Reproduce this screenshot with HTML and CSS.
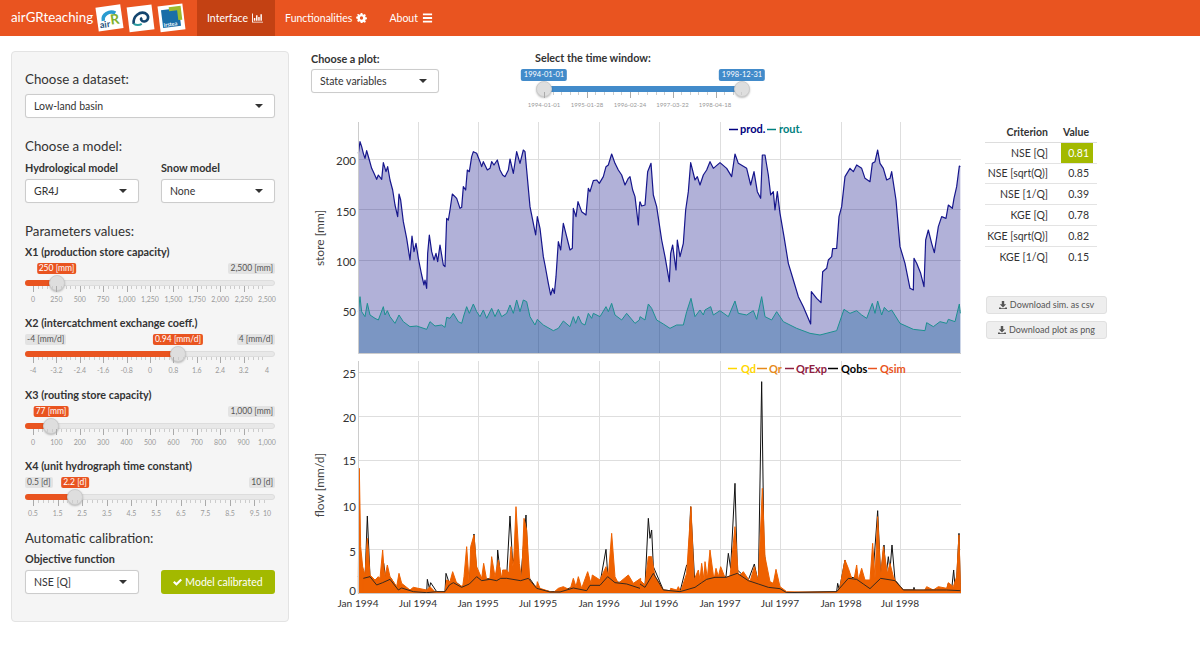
FILE: index.html
```html
<!DOCTYPE html>
<html lang="en">
<head>
<meta charset="utf-8">
<title>airGRteaching</title>
<link rel="stylesheet" href="styles.css">
</head>
<body>
<nav class="navbar">
  <span class="brand">airGRteaching</span>
  <svg class="logos" width="94" height="32" viewBox="0 0 94 32">
    <g transform="rotate(-8 14 16)">
      <rect x="2" y="4" width="25" height="24" fill="#fff"/>
      <path d="M8 18a8 7 0 0 1 13-6" fill="none" stroke="#2a9bd0" stroke-width="3.5"/>
      <text x="15" y="23" class="logo-r">R</text>
      <text x="4" y="25" class="logo-air">air</text>
    </g>
    <g transform="rotate(-7 45 16)">
      <rect x="33" y="4" width="25" height="25" fill="#fff"/>
      <path d="M38 21c0-8 8-12 13-9 4 3 2 8-2 8-3 0-4-3-2-4" fill="none" stroke="#14456f" stroke-width="2.6"/>
      <path d="M38 21q4 3 8 1" fill="none" stroke="#2a9ba0" stroke-width="2"/>
    </g>
    <g transform="rotate(-7 76 16)">
      <rect x="64" y="3" width="25" height="26" fill="#fff"/>
      <rect x="67" y="7" width="18" height="18" fill="#1a6ea8"/>
      <path d="M75 5h12v14h-4V9h-8z" fill="#9cbb2e"/>
      <text x="68" y="24" class="logo-irstea">irstea</text>
    </g>
  </svg>
  <ul class="nav-list">
    <li class="nav-item active">Interface
      <svg class="nav-icon" viewBox="0 0 12 10"><path d="M0 0h1v9h11v1H0z M2 5h1.6v3H2z M4.4 2h1.6v6H4.4z M6.8 4h1.6v4H6.8z M9.2 1h1.6v7H9.2z" fill="#fff"/></svg>
    </li>
    <li class="nav-item">Functionalities
      <svg class="nav-icon" viewBox="0 0 12 12"><path d="M5 0h2l.3 1.6 1.2.5L9.9 1.2l1.4 1.4-.9 1.4.5 1.2 1.6.3v2l-1.6.3-.5 1.2.9 1.4-1.4 1.4-1.4-.9-1.2.5L7 12H5l-.3-1.6-1.2-.5-1.4.9L.7 9.4l.9-1.4-.5-1.2L-.4 6.5v-2l1.5-.3.5-1.2-.9-1.4L2.1 1.2l1.4.9 1.2-.5zM6 4a2 2 0 1 0 0 4 2 2 0 0 0 0-4z" fill="#fff" fill-rule="evenodd"/></svg>
    </li>
    <li class="nav-item">About
      <svg class="nav-icon" viewBox="0 0 12 10"><path d="M1 0h10v2H1zM1 4h10v2H1zM1 8h10v2H1z" fill="#fff"/></svg>
    </li>
  </ul>
</nav>

<div class="layout">
  <aside class="panel">
    <h4 class="heading first">Choose a dataset:</h4>
    <div class="select">Low-land basin</div>

    <h4 class="heading">Choose a model:</h4>
    <div class="field-row">
      <div class="field"><label class="label">Hydrological model</label><div class="select">GR4J</div></div>
      <div class="field"><label class="label">Snow model</label><div class="select">None</div></div>
    </div>

    <h4 class="heading">Parameters values:</h4>

    <label class="label param first-param">X1 (production store capacity)</label>
    <div class="slider">
      <div class="track"></div>
      <div class="fill" style="width:32px"></div>
      <span class="badge end">2,500 [mm]</span>
      <span class="badge value" style="left:31.5px">250 [mm]</span>
      <div class="handle" style="left:32px"></div>
      <div class="grid">
        <span style="left:0%">0</span><span style="left:10%">250</span><span style="left:20%">500</span><span style="left:30%">750</span><span style="left:40%">1,000</span><span style="left:50%">1,250</span><span style="left:60%">1,500</span><span style="left:70%">1,750</span><span style="left:80%">2,000</span><span style="left:90%">2,250</span><span style="left:100%">2,500</span>
      </div>
    </div>

    <label class="label param">X2 (intercatchment exchange coeff.)</label>
    <div class="slider">
      <div class="track"></div>
      <div class="fill" style="width:153px"></div>
      <span class="badge start">-4 [mm/d]</span>
      <span class="badge end">4 [mm/d]</span>
      <span class="badge value" style="left:153px">0.94 [mm/d]</span>
      <div class="handle" style="left:153px"></div>
      <div class="grid">
        <span style="left:0%">-4</span><span style="left:10%">-3.2</span><span style="left:20%">-2.4</span><span style="left:30%">-1.6</span><span style="left:40%">-0.8</span><span style="left:50%">0</span><span style="left:60%">0.8</span><span style="left:70%">1.6</span><span style="left:80%">2.4</span><span style="left:90%">3.2</span><span style="left:100%">4</span>
      </div>
    </div>

    <label class="label param">X3 (routing store capacity)</label>
    <div class="slider">
      <div class="track"></div>
      <div class="fill" style="width:26px"></div>
      <span class="badge end">1,000 [mm]</span>
      <span class="badge value" style="left:26px">77 [mm]</span>
      <div class="handle" style="left:26px"></div>
      <div class="grid">
        <span style="left:0%">0</span><span style="left:10%">100</span><span style="left:20%">200</span><span style="left:30%">300</span><span style="left:40%">400</span><span style="left:50%">500</span><span style="left:60%">600</span><span style="left:70%">700</span><span style="left:80%">800</span><span style="left:90%">900</span><span style="left:100%">1,000</span>
      </div>
    </div>

    <label class="label param">X4 (unit hydrograph time constant)</label>
    <div class="slider short">
      <div class="track"></div>
      <div class="fill" style="width:50px"></div>
      <span class="badge start">0.5 [d]</span>
      <span class="badge end">10 [d]</span>
      <span class="badge value" style="left:50px">2.2 [d]</span>
      <div class="handle" style="left:50px"></div>
      <div class="grid wide-major">
        <span style="left:0%">0.5</span><span style="left:10.5%">1.5</span><span style="left:21%">2.5</span><span style="left:31.6%">3.5</span><span style="left:42.1%">4.5</span><span style="left:52.6%">5.5</span><span style="left:63.2%">6.5</span><span style="left:73.7%">7.5</span><span style="left:84.2%">8.5</span><span style="left:94.7%">9.5</span><span style="left:100%">10</span>
      </div>
    </div>

    <h4 class="heading tight">Automatic calibration:</h4>
    <label class="label obj">Objective function</label>
    <div class="field-row">
      <div class="select field">NSE [Q]</div>
      <button class="btn-success field">
        <svg class="btn-icon" viewBox="0 0 12 10"><path d="M0 5.5 2 3.5l2.6 2.6L10 0.6l2 2-7.4 7.4z" fill="#fff"/></svg>
        Model calibrated
      </button>
    </div>
  </aside>

  <main class="content">
    <div class="controls">
      <div class="plot-field">
        <label class="label">Choose a plot:</label>
        <div class="select">State variables</div>
      </div>
      <div class="time-field">
        <label class="label">Select the time window:</label>
        <div class="time-slider">
          <div class="time-track"></div>
          <span class="badge blue" style="left:9px">1994-01-01</span>
          <span class="badge blue" style="left:207px">1998-12-31</span>
          <div class="handle" style="left:9px"></div>
          <div class="handle" style="left:207px"></div>
          <div class="time-grid">
            <span style="left:0">1994-01-01</span><span style="left:43px">1995-01-28</span><span style="left:86px">1996-02-24</span><span style="left:128.5px">1997-03-22</span><span style="left:171px">1998-04-18</span>
          </div>
        </div>
      </div>
    </div>

    <div class="chart-row">
      <svg class="chart" width="660" height="495" viewBox="310 120 660 495">
        <!-- grid, top chart -->
        <path class="gridline" d="M418.5 122V353M478.5 122V353M538.5 122V353M599.5 122V353M659.5 122V353M720.5 122V353M780.5 122V353M841.5 122V353M900.5 122V353M358 159.5H961M358 209.5H961M358 260.5H961M358 310.5H961"/>
        <!-- areas, top chart -->
        <g opacity=".3" fill="#000080">
          <polygon transform="translate(310 120) scale(.33333)" points="145,700 145,100 150,65 155,80 160,100 165,115 170,92 178,120 185,145 192,160 200,178 205,165 215,178 220,128 228,155 233,140 240,180 248,210 255,255 263,290 267,222 272,240 280,305 290,355 300,420 306,348 312,395 318,370 325,415 335,465 342,495 345,480 350,505 353,400 358,345 365,395 372,420 378,400 383,425 390,375 400,435 405,440 410,295 415,300 420,270 427,222 440,235 450,265 455,262 460,200 467,210 472,150 478,155 485,110 490,95 500,100 510,125 515,140 520,125 532,150 540,145 545,125 552,135 562,120 570,150 578,165 585,170 595,150 600,117 610,160 620,95 630,130 640,90 645,95 650,150 660,260 670,310 677,345 682,290 690,325 700,410 705,435 715,490 722,525 728,505 733,520 738,470 745,365 752,390 760,310 770,350 780,390 787,385 790,265 798,290 804,245 815,275 828,285 835,205 840,215 850,182 860,180 868,190 880,170 888,140 895,135 905,102 915,130 925,150 935,165 945,195 955,175 960,170 968,210 975,230 985,315 988,260 992,245 992,700"/>
          <polygon transform="translate(640 120) scale(.33333)" points="0,700 0,245 5,258 15,255 23,155 33,130 40,225 50,260 65,360 75,410 88,485 92,400 98,375 108,450 112,360 120,410 130,370 137,270 145,215 152,128 165,180 172,170 180,195 190,165 200,150 210,125 220,145 240,128 260,145 275,170 285,102 295,130 320,145 332,195 342,155 352,215 362,235 367,105 375,105 385,165 392,225 400,215 405,270 412,215 420,280 432,350 445,430 460,480 475,530 490,560 512,612 514,515 530,535 543,548 548,455 560,445 565,420 575,410 578,386 590,385 597,290 605,260 615,170 630,145 640,155 650,135 665,145 675,175 690,185 697,130 705,125 713,90 720,130 730,145 740,180 750,175 755,155 768,240 780,380 795,430 810,505 820,510 822,415 830,430 842,460 852,500 857,360 865,330 875,370 883,398 895,320 905,290 918,295 925,255 937,265 942,235 950,200 958,138 961,140 961,700"/>
        </g>
        <g opacity=".3" fill="#005a96">
          <polygon transform="translate(310 120) scale(.33333)" points="145,700 145,575 150,530 155,575 165,590 172,550 180,585 195,595 205,600 220,560 225,585 232,572 240,590 255,610 267,585 280,605 300,620 320,618 350,628 360,605 375,618 395,615 405,622 410,592 420,595 430,580 445,605 455,610 462,585 470,560 478,580 490,552 500,575 510,590 520,570 530,595 545,565 555,590 565,568 575,590 590,580 600,555 610,580 620,540 630,575 640,540 650,545 660,590 675,615 682,598 700,615 730,632 745,625 760,603 780,620 790,590 797,610 805,588 815,610 825,615 835,580 845,595 850,580 870,590 888,560 895,575 905,550 915,585 935,600 950,580 975,610 988,600 992,590 992,700"/>
          <polygon transform="translate(640 120) scale(.33333)" points="0,700 0,590 15,600 25,552 35,565 50,600 70,612 90,625 110,615 130,615 140,575 153,535 165,590 180,570 190,585 195,570 212,560 220,585 240,572 265,590 285,543 295,580 320,585 340,572 350,598 365,530 375,590 395,600 410,575 430,605 470,625 510,640 540,645 590,632 612,568 630,580 650,572 665,585 680,595 697,550 705,580 713,543 725,585 733,562 745,575 755,570 780,610 820,628 855,632 860,608 880,620 900,605 920,610 925,598 945,605 958,552 961,580 961,700"/>
        </g>
        <!-- lines, top chart -->
        <polyline class="line prod" transform="translate(310 120) scale(.33333)" points="145,100 150,65 155,80 160,100 165,115 170,92 178,120 185,145 192,160 200,178 205,165 215,178 220,128 228,155 233,140 240,180 248,210 255,255 263,290 267,222 272,240 280,305 290,355 300,420 306,348 312,395 318,370 325,415 335,465 342,495 345,480 350,505 353,400 358,345 365,395 372,420 378,400 383,425 390,375 400,435 405,440 410,295 415,300 420,270 427,222 440,235 450,265 455,262 460,200 467,210 472,150 478,155 485,110 490,95 500,100 510,125 515,140 520,125 532,150 540,145 545,125 552,135 562,120 570,150 578,165 585,170 595,150 600,117 610,160 620,95 630,130 640,90 645,95 650,150 660,260 670,310 677,345 682,290 690,325 700,410 705,435 715,490 722,525 728,505 733,520 738,470 745,365 752,390 760,310 770,350 780,390 787,385 790,265 798,290 804,245 815,275 828,285 835,205 840,215 850,182 860,180 868,190 880,170 888,140 895,135 905,102 915,130 925,150 935,165 945,195 955,175 960,170 968,210 975,230 985,315 988,260 990,245"/>
        <polyline class="line prod" transform="translate(640 120) scale(.33333)" points="0,245 5,258 15,255 23,155 33,130 40,225 50,260 65,360 75,410 88,485 92,400 98,375 108,450 112,360 120,410 130,370 137,270 145,215 152,128 165,180 172,170 180,195 190,165 200,150 210,125 220,145 240,128 260,145 275,170 285,102 295,130 320,145 332,195 342,155 352,215 362,235 367,105 375,105 385,165 392,225 400,215 405,270 412,215 420,280 432,350 445,430 460,480 475,530 490,560 512,612 514,515 530,535 543,548 548,455 560,445 565,420 575,410 578,386 590,385 597,290 605,260 615,170 630,145 640,155 650,135 665,145 675,175 690,185 697,130 705,125 713,90 720,130 730,145 740,180 750,175 755,155 768,240 780,380 795,430 810,505 820,510 822,415 830,430 842,460 852,500 857,360 865,330 875,370 883,398 895,320 905,290 918,295 925,255 937,265 942,235 950,200 958,138 961,140"/>
        <polyline class="line rout" transform="translate(310 120) scale(.33333)" points="145,575 150,530 155,575 165,590 172,550 180,585 195,595 205,600 220,560 225,585 232,572 240,590 255,610 267,585 280,605 300,620 320,618 350,628 360,605 375,618 395,615 405,622 410,592 420,595 430,580 445,605 455,610 462,585 470,560 478,580 490,552 500,575 510,590 520,570 530,595 545,565 555,590 565,568 575,590 590,580 600,555 610,580 620,540 630,575 640,540 650,545 660,590 675,615 682,598 700,615 730,632 745,625 760,603 780,620 790,590 797,610 805,588 815,610 825,615 835,580 845,595 850,580 870,590 888,560 895,575 905,550 915,585 935,600 950,580 975,610 988,600 990,590"/>
        <polyline class="line rout" transform="translate(640 120) scale(.33333)" points="0,590 15,600 25,552 35,565 50,600 70,612 90,625 110,615 130,615 140,575 153,535 165,590 180,570 190,585 195,570 212,560 220,585 240,572 265,590 285,543 295,580 320,585 340,572 350,598 365,530 375,590 395,600 410,575 430,605 470,625 510,640 540,645 590,632 612,568 630,580 650,572 665,585 680,595 697,550 705,580 713,543 725,585 733,562 745,575 755,570 780,610 820,628 855,632 860,608 880,620 900,605 920,610 925,598 945,605 958,552 961,580"/>
        <path class="axis" d="M358.5 122V353.5H961"/>
        <text class="tick" x="356" y="165" text-anchor="end">200</text>
        <text class="tick" x="356" y="216" text-anchor="end">150</text>
        <text class="tick" x="356" y="266" text-anchor="end">100</text>
        <text class="tick" x="356" y="316" text-anchor="end">50</text>
        <text class="tick title" transform="translate(324 238) rotate(-90)" text-anchor="middle">store [mm]</text>
        <path class="key" stroke="#000080" d="M729 129.5H738"/><text class="legend" fill="#000080" x="740" y="133">prod.</text>
        <path class="key" stroke="#008080" d="M767 129.5H776"/><text class="legend" fill="#008080" x="779" y="133">rout.</text>

        <!-- grid, bottom chart -->
        <path class="gridline" d="M418.5 361V593M478.5 361V593M538.5 361V593M599.5 361V593M659.5 361V593M720.5 361V593M780.5 361V593M841.5 361V593M900.5 361V593M358 372.5H961M358 416.5H961M358 460.5H961M358 504.5H961M358 549.5H961"/>
        <polyline class="line obs" transform="translate(310 360) scale(.33333)" points="145,650 148,640 152,590 158,640 165,660 172,468 180,650 200,675 218,660 221,610 228,660 240,650 265,690 275,680 310,695 350,698 352,658 358,685 362,668 380,695 405,695 408,640 418,670 430,660 455,680 478,665 482,610 492,522 500,640 515,660 540,655 560,660 563,570 572,650 590,650 600,468 608,610 620,570 632,660 648,465 655,650 680,685 720,695 750,695 790,680 830,690 840,670 870,670 888,568 893,640 905,640 915,665 950,670 990,685"/>
        <polyline class="line obs" transform="translate(640 360) scale(.33333)" points="0,670 15,680 25,475 30,535 35,510 40,620 70,690 120,695 140,615 145,610 152,440 165,680 185,665 200,655 225,650 240,655 258,650 265,580 272,625 285,370 292,630 325,660 343,612 355,670 365,65 372,570 385,680 420,685 440,698 590,695 593,670 598,690 615,600 625,650 650,655 670,670 690,685 700,630 713,452 722,650 732,555 738,650 745,590 750,630 756,555 765,660 790,690 820,690 822,682 826,695 890,690 920,690 925,670 935,688 941,630 945,680 950,660 957,520 961,690"/>
        <polygon class="sim" transform="translate(310 360) scale(.33333)" points="145,700 145,640 148,325 152,560 158,620 165,645 172,535 180,645 195,660 205,650 210,655 218,570 224,655 232,615 240,650 260,680 267,640 275,670 300,690 310,682 350,690 360,680 375,695 405,695 410,660 420,665 428,635 440,670 458,680 462,650 470,560 478,675 482,560 492,525 500,620 515,655 521,610 530,660 540,655 545,590 555,650 565,600 575,655 578,630 590,630 597,640 603,560 610,630 618,440 628,610 635,660 642,475 650,510 660,670 680,680 682,665 690,685 730,698 745,685 760,680 780,690 790,655 798,680 805,650 815,685 833,635 843,670 847,645 870,660 888,620 895,650 905,520 915,650 925,670 955,645 970,670 992,655 992,700"/>
        <polygon class="sim" transform="translate(640 360) scale(.33333)" points="0,700 0,660 15,675 25,590 35,590 45,650 70,690 90,695 92,685 110,690 115,680 122,695 140,640 153,440 162,660 175,630 180,660 185,610 192,660 195,605 202,655 210,570 222,660 228,625 235,650 242,620 258,660 270,650 285,500 295,650 310,635 330,665 343,620 355,665 367,385 375,590 390,665 400,670 408,628 420,680 440,695 590,698 600,680 615,600 625,625 640,670 650,615 655,660 665,625 675,660 690,660 698,550 705,655 713,470 722,650 730,560 742,640 750,610 760,650 780,690 850,698 860,680 880,690 895,680 920,685 925,668 940,680 950,650 957,525 961,670 961,700"/>
        <polygon class="sim" transform="translate(310 360) scale(.33333)" points="160,700 160,655 180,650 200,675 218,668 240,658 265,690 275,684 310,695 350,698 380,695 405,695 418,675 430,668 455,682 478,672 500,650 515,662 540,658 560,662 572,655 590,655 632,662 655,655 680,685 720,696 750,696 790,684 830,692 840,676 870,676 893,650 915,668 950,672 990,685 990,700"/>
        <polygon class="sim" transform="translate(640 360) scale(.33333)" points="0,700 0,672 15,682 40,640 70,690 120,695 165,682 185,668 200,658 225,652 258,652 292,640 325,662 355,672 385,682 420,686 440,698 590,695 625,655 650,658 670,672 690,686 722,655 765,662 790,690 890,690 920,690 961,692 961,700"/>
        <polyline class="line obs-over" transform="translate(310 360) scale(.33333)" points="160,655 180,650 200,675 218,668 240,658 265,690 275,684 310,695 350,698 380,695 405,695 418,675 430,668 455,682 478,672 500,650 515,662 540,658 560,662 572,655 590,655 632,662 655,655 680,685 720,696 750,696 790,684 830,692 840,676 870,676 893,650 915,668 950,672 990,685"/>
        <polyline class="line obs-over" transform="translate(640 360) scale(.33333)" points="0,672 15,682 40,640 70,690 120,695 165,682 185,668 200,658 225,652 258,652 292,640 325,662 355,672 385,682 420,686 440,698 590,695 625,655 650,658 670,672 690,686 722,655 765,662 790,690 890,690 920,690 961,692"/>
        <path class="axis" d="M358.5 361V593.5H961"/>
        <text class="tick" x="356" y="378" text-anchor="end">25</text>
        <text class="tick" x="356" y="422" text-anchor="end">20</text>
        <text class="tick" x="356" y="465" text-anchor="end">15</text>
        <text class="tick" x="356" y="511" text-anchor="end">10</text>
        <text class="tick" x="356" y="556" text-anchor="end">5</text>
        <text class="tick" x="356" y="595" text-anchor="end">0</text>
        <text class="tick date" x="358" y="607" text-anchor="middle">Jan 1994</text>
        <text class="tick date" x="418" y="607" text-anchor="middle">Jul 1994</text>
        <text class="tick date" x="478" y="607" text-anchor="middle">Jan 1995</text>
        <text class="tick date" x="538" y="607" text-anchor="middle">Jul 1995</text>
        <text class="tick date" x="599" y="607" text-anchor="middle">Jan 1996</text>
        <text class="tick date" x="659" y="607" text-anchor="middle">Jul 1996</text>
        <text class="tick date" x="720" y="607" text-anchor="middle">Jan 1997</text>
        <text class="tick date" x="780" y="607" text-anchor="middle">Jul 1997</text>
        <text class="tick date" x="841" y="607" text-anchor="middle">Jan 1998</text>
        <text class="tick date" x="900" y="607" text-anchor="middle">Jul 1998</text>
        <text class="tick title" transform="translate(324 485) rotate(-90)" text-anchor="middle">flow [mm/d]</text>
        <path class="key" stroke="#ffd700" d="M728 368.5H737"/><text class="legend" fill="#ffd700" x="741" y="373">Qd</text>
        <path class="key" stroke="#e68a1a" d="M757 368.5H767"/><text class="legend" fill="#e68a1a" x="769" y="373">Qr</text>
        <path class="key" stroke="#8f2040" d="M785 368.5H794"/><text class="legend" fill="#8f2040" x="796" y="373">QrExp</text>
        <path class="key" stroke="#000" d="M828 368.5H838"/><text class="legend" fill="#000" x="841" y="373">Qobs</text>
        <path class="key" stroke="#e95420" d="M868 368.5H877"/><text class="legend" fill="#e95420" x="880" y="373">Qsim</text>
      </svg>

      <div class="side">
        <table class="scores">
          <thead><tr><th>Criterion</th><th class="val">Value</th></tr></thead>
          <tbody>
            <tr><td>NSE [Q]</td><td class="val"><span class="best">0.81</span></td></tr>
            <tr><td>NSE [sqrt(Q)]</td><td class="val">0.85</td></tr>
            <tr><td>NSE [1/Q]</td><td class="val">0.39</td></tr>
            <tr><td>KGE [Q]</td><td class="val">0.78</td></tr>
            <tr><td>KGE [sqrt(Q)]</td><td class="val">0.82</td></tr>
            <tr><td>KGE [1/Q]</td><td class="val">0.15</td></tr>
          </tbody>
        </table>
        <button class="btn-dl"><svg class="dl-icon" viewBox="0 0 10 10"><path d="M3.5 0h3v4H9L5 8 1 4h2.5zM0 8h2l1 1h4l1-1h2v2H0z" fill="#555"/></svg> Download sim. as csv</button>
        <button class="btn-dl"><svg class="dl-icon" viewBox="0 0 10 10"><path d="M3.5 0h3v4H9L5 8 1 4h2.5zM0 8h2l1 1h4l1-1h2v2H0z" fill="#555"/></svg> Download plot as png</button>
      </div>
    </div>
  </main>
</div>
</body>
</html>
```

FILE: styles.css
```css
* { box-sizing: border-box; }
html, body { margin: 0; padding: 0; }
body {
  background: #fff;
  color: #333;
  font-family: Lato, "Noto Sans", sans-serif;
  font-size: 11px;
  width: 1200px;
  height: 656px;
  overflow: hidden;
}

/* navbar */
.navbar {
  display: flex;
  align-items: center;
  height: 36px;
  background: #e95420;
  color: #fff;
}
.brand { margin-left: 11px; font-size: 13.3px; line-height: 36px; position: relative; top: -1px; width: 83px; white-space: nowrap; }
.logos { margin-left: 1px; flex: none; }
.logo-air { font: bold 9px Lato, sans-serif; fill: #1c4f7a; }
.logo-r { font: bold 14px Lato, sans-serif; fill: #7fb02c; }
.logo-irstea { font: bold 5.5px Lato, sans-serif; fill: #fff; }
.nav-list { display: flex; list-style: none; margin: 0 0 0 8px; padding: 0; height: 36px; }
.nav-item { display: flex; align-items: center; gap: 4px; padding: 0 12px 0 10px; font-size: 10.5px; white-space: nowrap; }
.nav-item.active { background: #c34113; }
.nav-icon { width: 11px; height: 10px; }

/* layout */
.layout { display: flex; gap: 21px; padding: 15px 0 0 11px; }
.panel {
  width: 278px;
  height: 571px;
  padding: 0 13px;
  flex: none;
  background: #f5f5f5;
  border: 1px solid #e3e3e3;
  border-radius: 4px;
}
.heading { margin: 18px 0 0; font-size: 13.3px; font-weight: 400; line-height: 20px; color: #333; white-space: nowrap; }
.heading.first { margin-top: 17px; margin-bottom: 5px; }
.heading.tight { margin-top: 0; }
.label { display: block; font-size: 10.8px; font-weight: 700; line-height: 12px; margin: 6px 0 5px; color: #333; white-space: nowrap; }
.label.param { margin: 0; }
.label.first-param { margin-top: 5px; }
.label.obj { margin: 5px 0 5px; }
.field-row { display: flex; gap: 22px; }
.field { flex: 0 0 114px; min-width: 0; }

.select {
  position: relative;
  height: 24px;
  padding-left: 8px;
  line-height: 22px;
  font-size: 10.5px;
  background: #fff;
  border: 1px solid #ccc;
  border-radius: 3px;
  box-shadow: 0 0 1px rgba(0,0,0,.1);
}
.select::after {
  content: "";
  position: absolute;
  right: 11px;
  top: 9px;
  border: 4px solid transparent;
  border-top-color: #333;
  border-bottom-width: 0;
}

/* sliders */
.slider { position: relative; height: 59.4px; }
.slider.short { height: 55.5px; }
.track {
  position: absolute; left: 0; right: 0; top: 22px; height: 6px;
  background: #e8e8e8; border: 1px solid #ddd; border-radius: 3px;
}
.fill { position: absolute; left: 0; top: 22px; height: 6px; background: #e95420; border-radius: 3px 0 0 3px; }
.handle {
  position: absolute; top: 17px; width: 16px; height: 16px; margin-left: -8px;
  border-radius: 50%; background: #dedede; border: 1px solid #ccc;
  box-shadow: 0 1px 2px rgba(0,0,0,.25);
}
.badge {
  position: absolute; top: 5px; height: 11px; padding: 0 2px;
  font-size: 8.5px; line-height: 11px; border-radius: 2px;
  background: #e3e3e3; color: #555; white-space: nowrap;
}
.badge.start { left: 0; }
.badge.end { right: 0; }
.badge.value { background: #e95420; color: #fff; transform: translateX(-50%); }
.badge.blue { background: #428bca; color: #fff; transform: translateX(-50%); }
.grid {
  position: absolute; left: 8px; right: 8px; top: 28px; height: 20px;
  background:
    repeating-linear-gradient(90deg, #aaa 0 1px, transparent 1px 23.4px) 0 0 / 100% 6px no-repeat,
    repeating-linear-gradient(90deg, #ccc 0 1px, transparent 1px 4.68px) 0 0 / 100% 3px no-repeat;
}
.grid.wide-major {
  background:
    repeating-linear-gradient(90deg, #aaa 0 1px, transparent 1px 24.6px) 0 0 / 100% 6px no-repeat,
    repeating-linear-gradient(90deg, #ccc 0 1px, transparent 1px 4.92px) 0 0 / 100% 3px no-repeat;
}
.grid span, .time-grid span {
  position: absolute; top: 8px; transform: translateX(-50%);
  font-size: 7px; line-height: 10px; color: #999; white-space: nowrap;
}

/* success button */
.btn-success {
  height: 24px; padding: 0;
  display: flex; align-items: center; justify-content: center; gap: 3px;
  background: #a3b900; color: #fff; border: 0; border-radius: 3px;
  font: 10.5px Lato, sans-serif; white-space: nowrap;
}
.btn-icon { width: 9px; height: 8px; }

/* main */
.content { flex: 1; min-width: 0; }
.controls { display: flex; height: 69px; padding-left: 1px; }
.plot-field { width: 128px; }
.plot-field .label { margin: 2px 0 4px; }
.time-field { width: 224px; margin-left: 96px; }
.time-field .label { margin: 1px 0 0; }
.time-slider { position: relative; height: 50px; }
.time-slider .badge { top: 5px; height: 12px; line-height: 12px; font-size: 7.5px; padding: 0 3px; }
.time-slider .handle { top: 17px; }
.time-track { position: absolute; left: 9px; width: 198px; top: 22px; height: 6px; background: #428bca; }
.time-grid {
  position: absolute; left: 9px; width: 198px; top: 28px; height: 20px;
  background:
    repeating-linear-gradient(90deg, #aaa 0 1px, transparent 1px 42.9px) 0 0 / 100% 6px no-repeat,
    repeating-linear-gradient(90deg, #ccc 0 1px, transparent 1px 8.58px) 0 0 / 100% 3px no-repeat;
}
.time-grid span { font-size: 6px; }

/* charts */
.chart-row { display: flex; gap: 15px; }
.chart { display: block; flex: none; }
.gridline { stroke: #dedede; stroke-width: 1; fill: none; }
.axis { stroke: #ccc; stroke-width: 1; fill: none; }
.line { fill: none; vector-effect: non-scaling-stroke; stroke-width: 1; stroke-linejoin: round; }
.prod { stroke: #16168c; stroke-width: 1.2; }
.rout { stroke: #1d9090; }
.obs { stroke: #111; }
.obs-over { stroke: #222; stroke-width: .9; }
.sim { fill: #ee6100; stroke: #ee6100; stroke-width: 1; vector-effect: non-scaling-stroke; }
.tick { font-size: 11.5px; fill: #333; }
.tick.date { font-size: 10.2px; }
.tick.title { font-size: 12px; fill: #444; }
.key { stroke-width: 1.5; fill: none; }
.legend { font-size: 11px; font-weight: 700; }

/* side column */
.side { width: 125px; padding-top: 3px; display: flex; flex-direction: column; align-items: flex-start; }
.scores { width: 112px; border-collapse: collapse; font-size: 10.5px; margin-bottom: 29px; white-space: nowrap; }
.scores th { height: 19px; text-align: right; font-weight: 700; padding: 0 4px 0 0; border-bottom: 1px solid #ddd; }
.scores td { height: 20.8px; text-align: right; padding: 0 4px 0 0; border-top: 1px solid #e3e3e3; }
.scores tbody tr:first-child td { border-top: 0; }
.scores .val { width: 45px; padding-right: 8px; }
.best { display: block; margin: 0 -4px 0 9px; padding-right: 4px; height: 20px; line-height: 20px; background: #a3b900; color: #fff; }
.btn-dl {
  width: 121px; height: 18px; margin: 0 0 7px 1px; padding: 0;
  display: flex; align-items: center; justify-content: center; gap: 3px;
  background: #eee; border: 1px solid #e0e0e0; border-radius: 3px;
  font: 9px Lato, sans-serif; color: #555; white-space: nowrap;
}
.dl-icon { width: 8px; height: 8px; }
```
